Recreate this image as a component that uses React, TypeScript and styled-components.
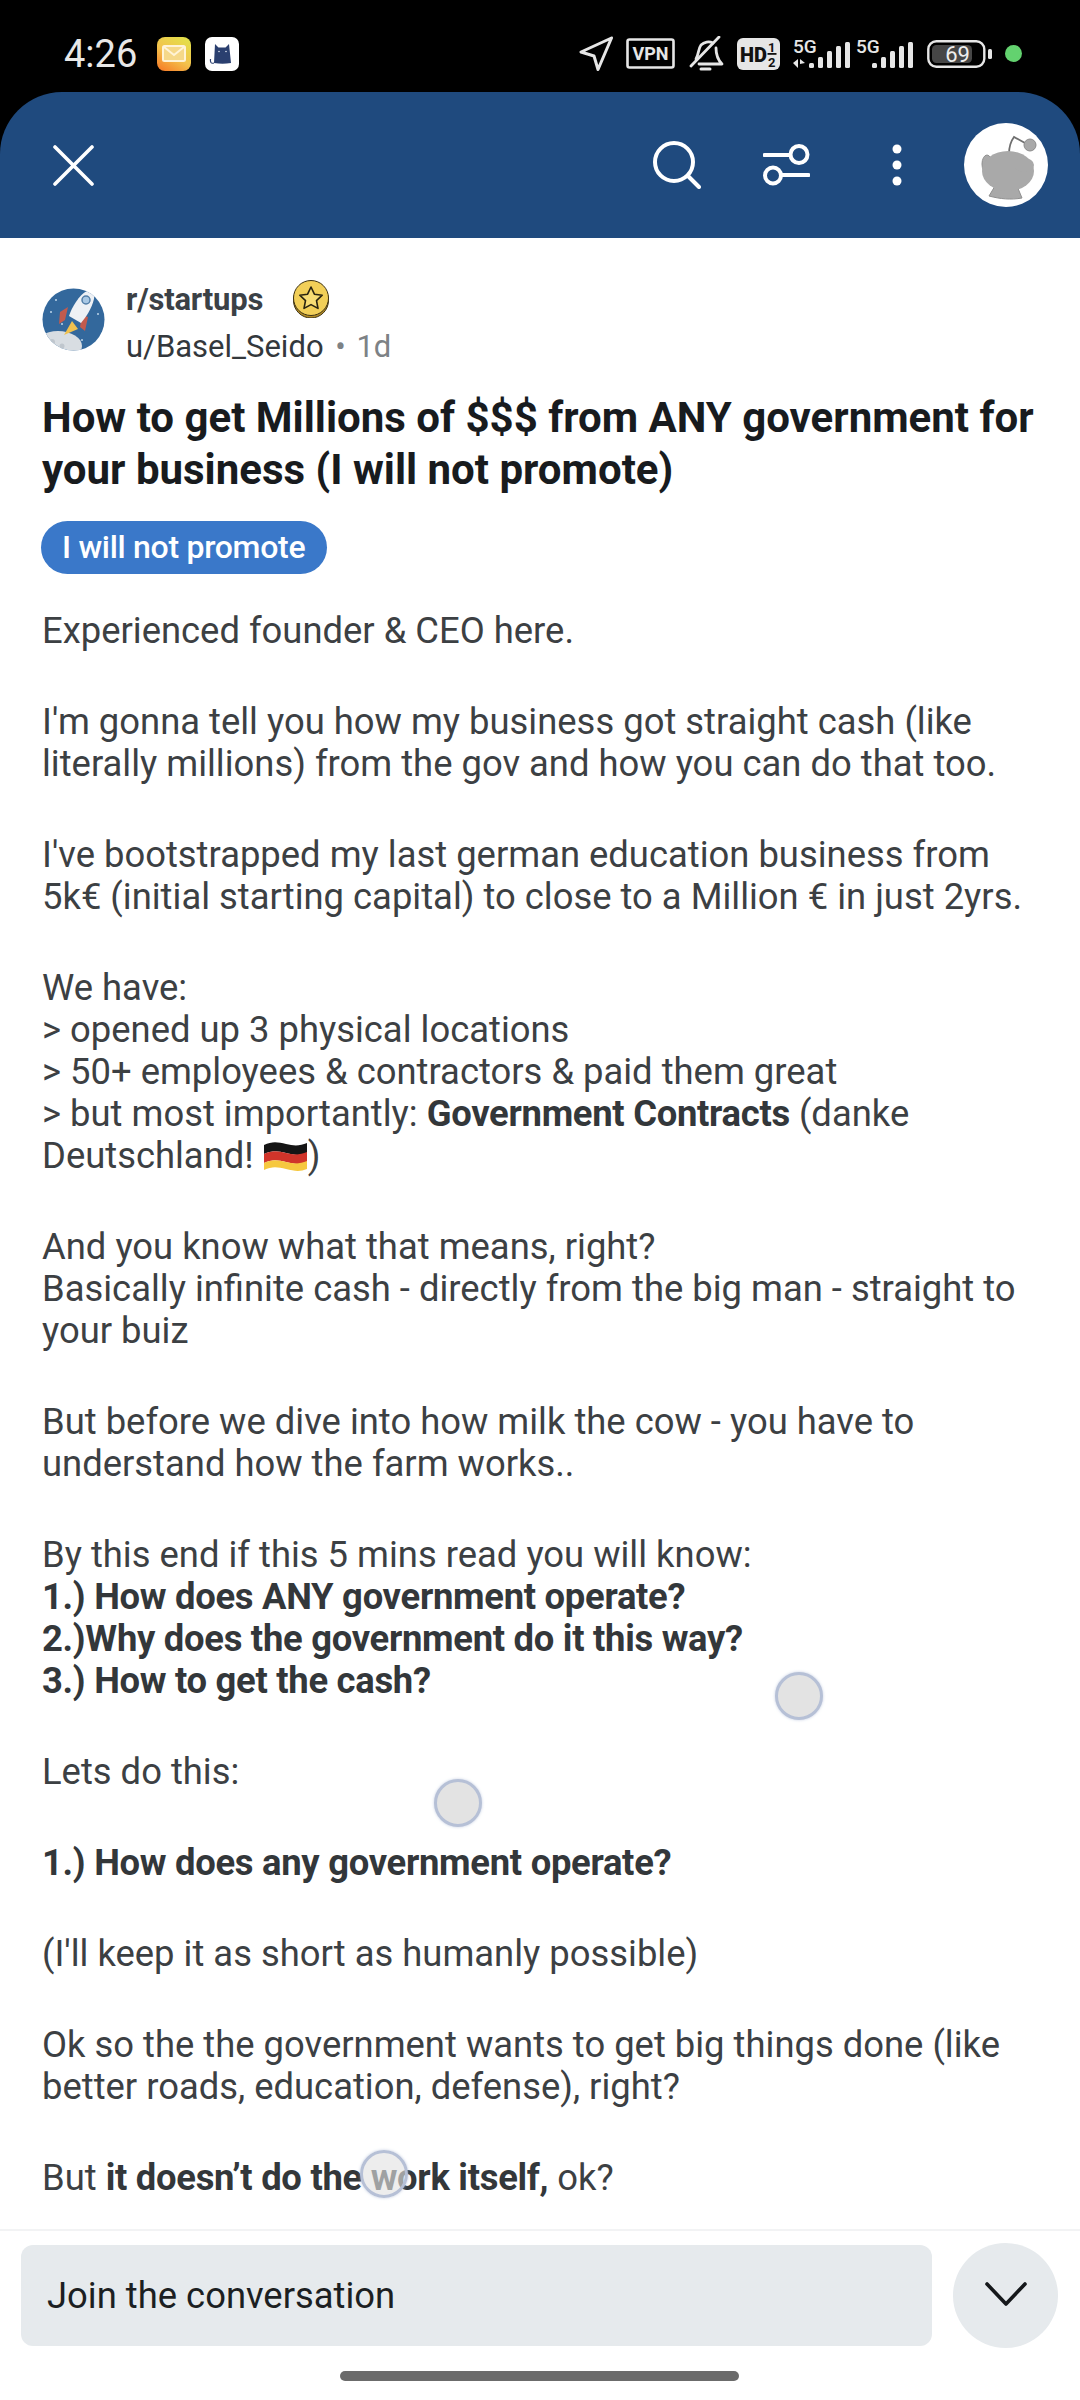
import { ReactElement } from 'react'
import styled, { createGlobalStyle } from 'styled-components'

const GlobalStyle = createGlobalStyle`
  html, body {
    margin: 0;
    padding: 0;
    background: #ffffff;
  }
  body {
    font-family: Roboto, "Liberation Sans", sans-serif;
  }
`

const Screen = styled.div`
  position: relative;
  width: 1080px;
  height: 2400px;
  overflow: hidden;
  background: #000000;
  display: flex;
  flex-direction: column;
`

const StatusBar = styled.div`
  height: 92px;
  flex: none;
  padding: 15px 58px 0 64px;
  display: flex;
  align-items: center;
  box-sizing: border-box;
  color: #e8e8e8;
`

const Clock = styled.span`
  font-size: 38px;
  line-height: 38px;
  width: 93px;
  flex: none;
  margin-top: 1px;
`

const Notifications = styled.div`
  display: flex;
  gap: 14px;
  flex: 1;
`

const StatusIcons = styled.div`
  display: flex;
  align-items: center;
  gap: 13px;
`

const SignalGroup = styled.div`
  display: flex;
  gap: 5px;
`

const Header = styled.header`
  height: 146px;
  flex: none;
  background: #1f4a7e;
  border-radius: 62px 62px 0 0;
  display: flex;
  align-items: center;
  padding: 0 32px 0 53px;
  box-sizing: border-box;
`

const HeaderActions = styled.div`
  margin-left: auto;
  display: flex;
  align-items: center;
  gap: 62px;
`

const FilterSlot = styled.div`
  margin-right: 20px;
  display: flex;
`

const Post = styled.main`
  flex: 1;
  min-height: 0;
  background: #ffffff;
  padding: 39px 30px 0 42px;
  overflow: hidden;
`

const MetaRow = styled.div`
  display: flex;
  align-items: flex-start;
  gap: 21px;
`

const SubredditAvatar = styled.div`
  width: 63px;
  height: 63px;
  margin-top: 11px;
  flex: none;
`

const MetaText = styled.div`
  display: flex;
  flex-direction: column;
`

const SubredditLine = styled.div`
  display: flex;
  align-items: center;
  gap: 29px;
  height: 44px;
`

const SubredditName = styled.span`
  font-size: 31px;
  font-weight: 700;
  color: #3b4146;
  letter-spacing: -0.2px;
`

const AuthorLine = styled.div`
  font-size: 31px;
  line-height: 38px;
  margin-top: 7px;
  color: #33383c;
`

const Age = styled.span`
  color: #7d8285;
  margin-left: 4px;
  word-spacing: 3px;
`

const Title = styled.h1`
  margin: 26px 0 0;
  font-size: 42px;
  line-height: 52px;
  font-weight: 700;
  color: #181b1e;
`

const Flair = styled.div`
  display: inline-block;
  margin: 25px 0 0 -1px;
  height: 53px;
  line-height: 53px;
  width: 286px;
  box-sizing: border-box;
  padding-left: 21px;
  border-radius: 27px;
  background: #3a78c9;
  color: #ffffff;
  font-size: 32px;
  font-weight: 500;
  letter-spacing: -0.3px;
`

const Body = styled.div`
  margin-top: 36px;
`

const Paragraph = styled.p`
  margin: 0 0 49px;
  font-size: 36.4px;
  line-height: 42px;
  color: #3c4043;

  strong {
    font-weight: 700;
    color: #33373a;
    letter-spacing: -0.28px;
  }
`

const FlagIcon = styled.svg`
  width: 45px;
  height: 33px;
  vertical-align: -5px;
`

const Composer = styled.footer`
  flex: none;
  height: 171px;
  background: #ffffff;
  border-top: 2px solid #f2f3f4;
  box-sizing: border-box;
  padding: 12px 22px 0 21px;
`

const ComposerRow = styled.div`
  display: flex;
  align-items: center;
  gap: 21px;
`

const ComposerInput = styled.div`
  flex: 1;
  height: 101px;
  border-radius: 12px;
  background: #e6eaed;
  display: flex;
  align-items: center;
  padding-left: 26px;
  font-size: 36.4px;
  color: #1c1f22;
`

const CollapseButton = styled.div`
  width: 105px;
  height: 105px;
  flex: none;
  box-sizing: border-box;
  padding-bottom: 4px;
  border-radius: 50%;
  background: #e6eaed;
  display: flex;
  align-items: center;
  justify-content: center;
`

const HomeBar = styled.div`
  width: 399px;
  height: 10px;
  margin: 23px auto 0;
  border-radius: 5px;
  background: #6b6b6b;
`

const TouchDot = styled.div<{ $x: number, $y: number, $faint?: boolean }>`
  position: absolute;
  left: ${p => p.$x - 24}px;
  top: ${p => p.$y - 24}px;
  width: 48px;
  height: 48px;
  box-sizing: border-box;
  border-radius: 50%;
  border: 3px solid #b6c0d6;
  background: ${p => p.$faint === true ? 'rgba(226, 226, 226, 0.62)' : '#e3e3e3'};
  box-shadow: 0 0 3px rgba(170, 184, 214, 0.7);
`

function MailBadge (): ReactElement {
  return (
    <svg width="34" height="34" viewBox="0 0 34 34">
      <defs>
        <linearGradient id="mailBg" x1="0.8" y1="0" x2="0.2" y2="1">
          <stop offset="0" stopColor="#e3e04a" />
          <stop offset="0.55" stopColor="#f3c24c" />
          <stop offset="1" stopColor="#f6812a" />
        </linearGradient>
      </defs>
      <rect width="34" height="34" rx="8" fill="url(#mailBg)" />
      <rect x="6" y="9" width="22" height="15" rx="1.5" fill="#f5d889" stroke="#fff3d6" strokeWidth="2" />
      <path d="M7 10l10 8 10-8" fill="none" stroke="#fff3d6" strokeWidth="2" />
    </svg>
  )
}

function CatBadge (): ReactElement {
  return (
    <svg width="34" height="34" viewBox="0 0 34 34">
      <rect width="34" height="34" rx="7" fill="#ffffff" />
      <path d="M10 7l3.500 3.500h7L24 7l2 19c-6 1-11 1-17 0z" fill="#2a3f6f" />
      <path d="M9 26c-3 1-4-1-3.500-4" fill="none" stroke="#2a3f6f" strokeWidth="1.200" />
      <circle cx="14" cy="14.500" r="0.800" fill="#dfe6f2" />
      <circle cx="21" cy="14.500" r="0.800" fill="#dfe6f2" />
    </svg>
  )
}

function SendArrow (): ReactElement {
  return (
    <svg width="34" height="35" viewBox="0 0 34 35" fill="none" stroke="#e6e6e6" strokeWidth="3" strokeLinejoin="round">
      <path d="M32.500 2L2 16l13 4 4 13.500z" />
    </svg>
  )
}

function VpnBadge (): ReactElement {
  return (
    <svg width="49" height="31" viewBox="0 0 49 31">
      <rect x="1.500" y="1.500" width="46" height="28" rx="2" fill="none" stroke="#e6e6e6" strokeWidth="2.600" />
      <text x="24.500" y="22" textAnchor="middle" fontFamily="Roboto" fontWeight="700" fontSize="18" fill="#e6e6e6">VPN</text>
    </svg>
  )
}

function MutedBell (): ReactElement {
  return (
    <svg width="36" height="35" viewBox="0 0 36 35" fill="none" stroke="#e6e6e6" strokeWidth="2.800" strokeLinecap="round" strokeLinejoin="round">
      <path d="M8 23c3-5 2-10 5-14 3-3 8-4 12-2" />
      <path d="M28 12c0 6 1 11 6 16H11" />
      <path d="M13 33h9" strokeWidth="3" />
      <path d="M31 1L3 30" />
    </svg>
  )
}

function HdBadge (): ReactElement {
  return (
    <svg width="43" height="32" viewBox="0 0 43 32">
      <rect width="43" height="32" rx="6" fill="#e6e6e6" />
      <text x="3" y="23.500" fontFamily="Roboto" fontWeight="900" fontSize="20" fill="#111111">HD</text>
      <text x="31" y="14" fontFamily="Roboto" fontWeight="700" fontSize="13" fill="#111111">1</text>
      <text x="31" y="29" fontFamily="Roboto" fontWeight="700" fontSize="13" fill="#111111">2</text>
      <rect x="30.500" y="15" width="9" height="1.800" fill="#111111" />
    </svg>
  )
}

function Signal ({ withData }: { withData: boolean }): ReactElement {
  return (
    <svg width="58" height="30" viewBox="0 0 58 30" fill="#e6e6e6">
      <text x="0" y="14" fontFamily="Roboto" fontWeight="500" fontSize="19">5G</text>
      {withData && <path d="M0 24l5-4v9zM7 20l5 4-5 1v4z" />}
      <rect x="16" y="24" width="5" height="5" rx="1.500" />
      <rect x="25" y="18" width="5" height="11" rx="1.500" />
      <rect x="34" y="12" width="5" height="17" rx="1.500" />
      <rect x="43" y="7" width="5" height="22" rx="1.500" />
      <rect x="52" y="3" width="5" height="26" rx="1.500" />
    </svg>
  )
}

function Battery (): ReactElement {
  return (
    <svg width="65" height="28" viewBox="0 0 65 28">
      <rect x="1.300" y="1.300" width="56" height="25.400" rx="8" fill="none" stroke="#e6e6e6" strokeWidth="2.400" />
      <rect x="5" y="5" width="40" height="18" rx="4.500" fill="#464646" />
      <rect x="61" y="9" width="4" height="10" rx="1.500" fill="#e6e6e6" />
      <text x="30.500" y="22" textAnchor="middle" fontFamily="Roboto" fontSize="22" fill="#eeeeee">69</text>
    </svg>
  )
}

function GreenDot (): ReactElement {
  return (
    <svg width="17" height="17" viewBox="0 0 17 17">
      <circle cx="8.500" cy="8.500" r="8.500" fill="#63d26f" />
    </svg>
  )
}

function CloseIcon (): ReactElement {
  return (
    <svg width="41" height="41" viewBox="0 0 41 41" fill="none" stroke="#ffffff" strokeWidth="3.600" strokeLinecap="round">
      <path d="M2 2l37 37M39 2L2 39" />
    </svg>
  )
}

function SearchIcon (): ReactElement {
  return (
    <svg width="48" height="48" viewBox="0 0 48 48" fill="none" stroke="#ffffff" strokeWidth="4" strokeLinecap="round">
      <circle cx="21" cy="21" r="19" />
      <path d="M35 35l11 11" />
    </svg>
  )
}

function FilterIcon (): ReactElement {
  return (
    <svg width="47" height="42" viewBox="0 0 47 42" fill="none" stroke="#ffffff" strokeWidth="4" strokeLinecap="round">
      <circle cx="36" cy="10.500" r="8.500" />
      <path d="M1.500 11H27" />
      <circle cx="10" cy="31.500" r="8" />
      <path d="M19 31h26.500" />
    </svg>
  )
}

function MoreIcon (): ReactElement {
  return (
    <svg width="10" height="42" viewBox="0 0 10 42" fill="#ffffff">
      <circle cx="5" cy="5" r="4.500" />
      <circle cx="5" cy="21" r="4.500" />
      <circle cx="5" cy="37" r="4.500" />
    </svg>
  )
}

function SnooAvatar (): ReactElement {
  return (
    <svg width="84" height="84" viewBox="0 0 84 84">
      <circle cx="42" cy="42" r="42" fill="#ffffff" />
      <path d="M45 31c0-8 2-13 5-17l11 6" fill="none" stroke="#6f6f6f" strokeWidth="1.800" />
      <circle cx="66" cy="22" r="6" fill="#a9a9a9" stroke="#8c8c8c" />
      <path d="M25 73l6-10h22l5 12c-11 2-22 1-33-2z" fill="#a9a9a9" stroke="#8f8f8f" />
      <ellipse cx="23" cy="41" rx="5" ry="9" fill="#a9a9a9" stroke="#8f8f8f" />
      <ellipse cx="44" cy="48" rx="26" ry="20" fill="#a9a9a9" />
      <ellipse cx="60" cy="42" rx="10" ry="7" fill="#a9a9a9" />
    </svg>
  )
}

function RocketAvatar (): ReactElement {
  return (
    <svg width="63" height="63" viewBox="0 0 63 63">
      <defs>
        <clipPath id="rocketClip"><circle cx="31.500" cy="31.500" r="31" /></clipPath>
      </defs>
      <g clipPath="url(#rocketClip)">
        <rect width="63" height="63" fill="#33689c" />
        <ellipse cx="16" cy="58" rx="24" ry="15" fill="#d8dde2" />
        <circle cx="10" cy="54" r="3" fill="#bfc6cd" />
        <circle cx="20" cy="58" r="2.500" fill="#bfc6cd" />
        <path d="M22 47l8-14 6 8z" fill="#f0c14f" />
        <path d="M18 24l8-5-3 13-6 4zM40 27l6 2-3 14-5-4z" fill="#c25b4e" />
        <path d="M45 3c5 0 8 2 7 8-2 9-8 18-13 24l-12-7c3-9 10-21 18-25z" fill="#eef1f5" />
        <circle cx="44" cy="12" r="4" fill="#a9c8e4" stroke="#527ea8" strokeWidth="1.500" />
        <circle cx="9" cy="24" r="1" fill="#bcd4ea" />
        <circle cx="14" cy="12" r="1" fill="#bcd4ea" />
        <circle cx="56" cy="26" r="1" fill="#bcd4ea" />
        <circle cx="40" cy="52" r="1" fill="#bcd4ea" />
        <circle cx="20" cy="36" r="1" fill="#bcd4ea" />
      </g>
    </svg>
  )
}

function CoinIcon (): ReactElement {
  return (
    <svg width="38" height="38" viewBox="0 0 38 38">
      <circle cx="19" cy="20.500" r="17.500" fill="#b58d25" stroke="#3d3215" strokeWidth="1" />
      <circle cx="19" cy="18" r="17.500" fill="#f2cf58" stroke="#3d3215" strokeWidth="1" />
      <path d="M19 7l3.400 7.200 7.800 1-5.700 5.400 1.500 7.800L19 24.600l-7 3.800 1.500-7.800-5.700-5.400 7.800-1z" fill="#f7dc74" stroke="#2a2410" strokeWidth="1.600" strokeLinejoin="round" />
    </svg>
  )
}

function GermanFlag (): ReactElement {
  return (
    <FlagIcon viewBox="0 0 45 33">
      <path d="M1 5c8-4 14-3 22-1 8 2 14 2 21-1v10c-7 3-13 2-21 0-8-2-14-3-22 1z" fill="#151515" />
      <path d="M1 14c8-4 14-3 22-1 8 2 14 2 21-1v10c-7 3-13 2-21 0-8-2-14-3-22 1z" fill="#d0342a" />
      <path d="M1 23c8-4 14-3 22-1 8 2 14 2 21-1v8c-7 3-13 2-21 0-8-2-14-3-22 1z" fill="#f6c83f" />
    </FlagIcon>
  )
}

function ChevronIcon (): ReactElement {
  return (
    <svg width="42" height="24" viewBox="0 0 42 24" fill="none" stroke="#15181b" strokeWidth="3.600" strokeLinecap="round" strokeLinejoin="round">
      <path d="M2 2l19 20L40 2" />
    </svg>
  )
}

export default function App (): ReactElement {
  return (
    <Screen>
      <GlobalStyle />
      <StatusBar>
        <Clock>4:26</Clock>
        <Notifications>
          <MailBadge />
          <CatBadge />
        </Notifications>
        <StatusIcons>
          <SendArrow />
          <VpnBadge />
          <MutedBell />
          <HdBadge />
          <SignalGroup>
            <Signal withData />
            <Signal withData={false} />
          </SignalGroup>
          <Battery />
          <GreenDot />
        </StatusIcons>
      </StatusBar>
      <Header>
        <CloseIcon />
        <HeaderActions>
          <SearchIcon />
          <FilterSlot><FilterIcon /></FilterSlot>
          <MoreIcon />
          <SnooAvatar />
        </HeaderActions>
      </Header>
      <Post>
        <MetaRow>
          <SubredditAvatar><RocketAvatar /></SubredditAvatar>
          <MetaText>
            <SubredditLine>
              <SubredditName>r/startups</SubredditName>
              <CoinIcon />
            </SubredditLine>
            <AuthorLine>u/Basel_Seido <Age>• 1d</Age></AuthorLine>
          </MetaText>
        </MetaRow>
        <Title>How to get Millions of $$$ from ANY government for your business (I will not promote)</Title>
        <Flair>I will not promote</Flair>
        <Body>
          <Paragraph>Experienced founder &amp; CEO here.</Paragraph>
          <Paragraph>I'm gonna tell you how my business got straight cash (like literally millions) from the gov and how you can do that too.</Paragraph>
          <Paragraph>I've bootstrapped my last german education business from<br />5k€ (initial starting capital) to close to a Million € in just 2yrs.</Paragraph>
          <Paragraph>
            We have:<br />
            &gt; opened up 3 physical locations<br />
            &gt; 50+ employees &amp; contractors &amp; paid them great<br />
            &gt; but most importantly: <strong>Government Contracts</strong> (danke Deutschland! <GermanFlag />)
          </Paragraph>
          <Paragraph>
            And you know what that means, right?<br />
            Basically infinite cash - directly from the big man - straight to your buiz
          </Paragraph>
          <Paragraph>But before we dive into how milk the cow - you have to understand how the farm works..</Paragraph>
          <Paragraph>
            By this end if this 5 mins read you will know:<br />
            <strong>1.) How does ANY government operate?</strong><br />
            <strong>2.)Why does the government do it this way?</strong><br />
            <strong>3.) How to get the cash?</strong>
          </Paragraph>
          <Paragraph>Lets do this:</Paragraph>
          <Paragraph><strong>1.) How does any government operate?</strong></Paragraph>
          <Paragraph>(I'll keep it as short as humanly possible)</Paragraph>
          <Paragraph>Ok so the the government wants to get big things done (like better roads, education, defense), right?</Paragraph>
          <Paragraph>But <strong>it doesn’t do the work itself,</strong> ok?</Paragraph>
        </Body>
      </Post>
      <Composer>
        <ComposerRow>
          <ComposerInput>Join the conversation</ComposerInput>
          <CollapseButton><ChevronIcon /></CollapseButton>
        </ComposerRow>
        <HomeBar />
      </Composer>
      <TouchDot $x={799} $y={1696} />
      <TouchDot $x={458} $y={1803} />
      <TouchDot $x={384} $y={2174} $faint />
    </Screen>
  )
}
